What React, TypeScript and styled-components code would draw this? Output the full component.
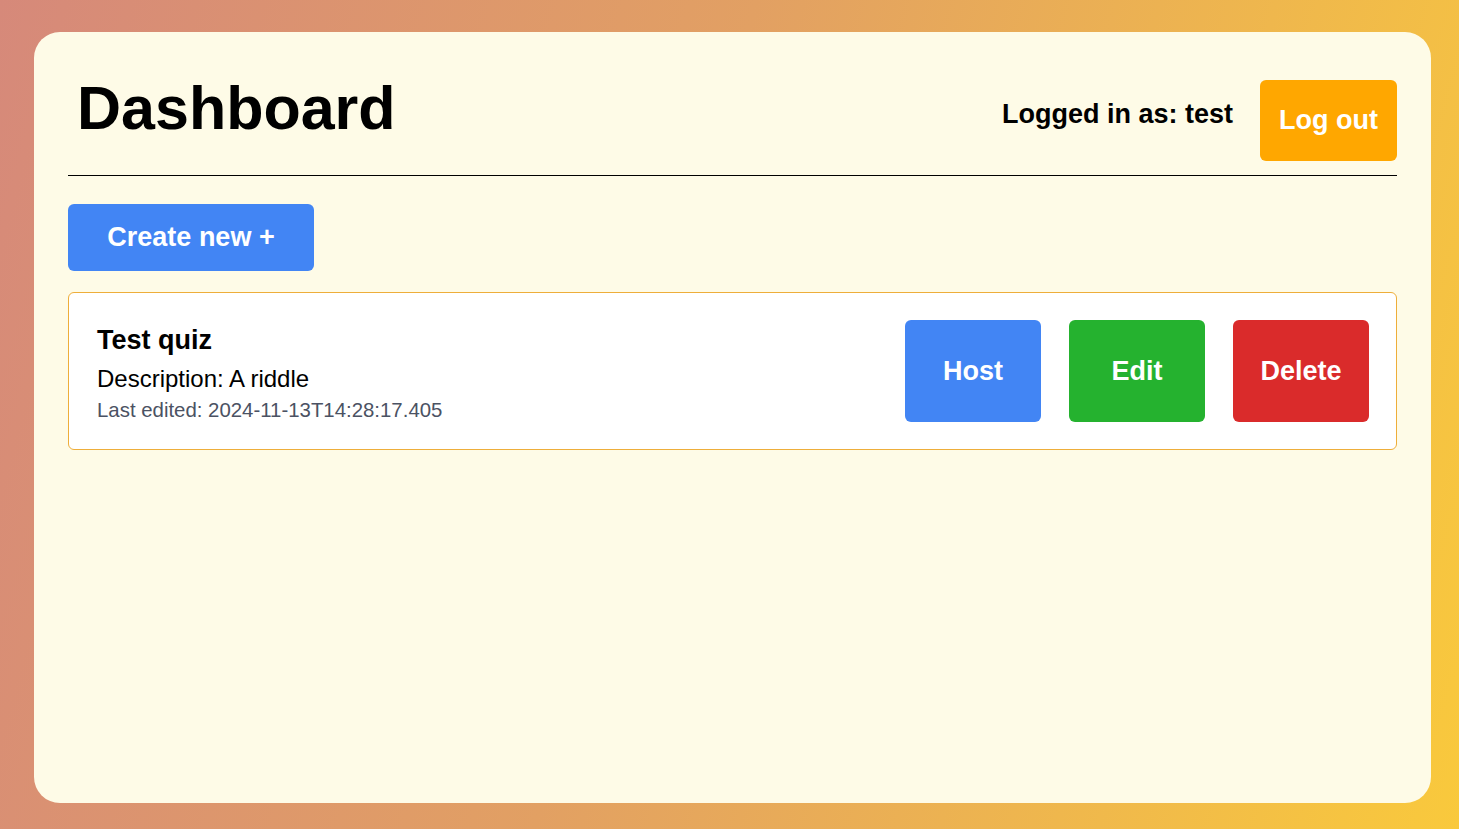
import React from 'react';
import styled, { createGlobalStyle } from 'styled-components';

const GlobalStyle = createGlobalStyle`
  html, body {
    margin: 0;
    padding: 0;
  }
  body {
    font-family: "Liberation Sans", Arial, sans-serif;
  }
  * {
    box-sizing: border-box;
  }
`;

const Page = styled.div`
  min-height: 100vh;
  padding: 32px 28px 26px 34px;
  background: linear-gradient(105deg, #d6897a 0%, #e2a063 45%, #f9c93c 100%);
  display: flex;
`;

const Card = styled.main`
  flex: 1;
  background-color: #fefbe7;
  border-radius: 26px;
  padding: 34px 34px;
  display: flex;
  flex-direction: column;
`;

const Header = styled.header`
  display: flex;
  justify-content: space-between;
  align-items: flex-start;
  padding-bottom: 14px;
  border-bottom: 1px solid #000;
`;

const Title = styled.h1`
  margin: 7px 0 0;
  padding: 0 10px 0 9px;
  font-size: 61px;
  font-weight: 700;
  color: #000;
`;

const UserArea = styled.div`
  display: flex;
  align-items: flex-start;
  gap: 27px;
`;

const UserLabel = styled.span`
  margin-top: 33px;
  font-size: 27px;
  font-weight: 700;
  color: #000;
`;

const Button = styled.button<{ $color: string }>`
  border: none;
  border-radius: 6px;
  background-color: ${(p) => p.$color};
  color: #fff;
  font-family: "Liberation Sans", Arial, sans-serif;
  font-weight: 700;
  cursor: pointer;
`;

const LogoutButton = styled(Button)`
  margin-top: 14px;
  height: 81px;
  padding: 0 19px;
  font-size: 27px;
`;

const CreateButton = styled(Button)`
  align-self: flex-start;
  margin-top: 28px;
  height: 67px;
  width: 246px;
  padding: 0;
  font-size: 27px;
`;

const QuizList = styled.section`
  margin-top: 21px;
  display: flex;
  flex-direction: column;
  gap: 16px;
`;

const QuizCard = styled.article`
  display: flex;
  align-items: center;
  justify-content: space-between;
  padding: 27px 27px 27px 28px;
  background-color: #fff;
  border: 1px solid #eeae3a;
  border-radius: 6px;
`;

const QuizInfo = styled.div`
  display: flex;
  flex-direction: column;
  margin-top: 5px;
`;

const QuizName = styled.h2`
  margin: 0 0 9px;
  font-size: 27px;
  font-weight: 700;
  color: #000;
`;

const QuizDesc = styled.p`
  margin: 0 0 6px;
  font-size: 24px;
  color: #000;
`;

const QuizDate = styled.p`
  margin: 0;
  font-size: 20.4px;
  color: #4b5263;
`;

const Actions = styled.div`
  display: flex;
  gap: 28px;
`;

const ActionButton = styled(Button)`
  width: 136px;
  height: 102px;
  font-size: 27px;
`;

const quizzes = [
  {
    name: 'Test quiz',
    description: 'A riddle',
    edited: '2024-11-13T14:28:17.405',
  },
];

const App: React.FC = () => {
  return (
    <>
      <GlobalStyle />
      <Page>
        <Card>
          <Header>
            <Title>Dashboard</Title>
            <UserArea>
              <UserLabel>Logged in as: test</UserLabel>
              <LogoutButton $color="#ffa700">Log out</LogoutButton>
            </UserArea>
          </Header>
          <CreateButton $color="#4285f4">Create new +</CreateButton>
          <QuizList>
            {quizzes.map((quiz, index) => (
              <QuizCard key={index}>
                <QuizInfo>
                  <QuizName>{quiz.name}</QuizName>
                  <QuizDesc>Description: {quiz.description}</QuizDesc>
                  <QuizDate>Last edited: {quiz.edited}</QuizDate>
                </QuizInfo>
                <Actions>
                  <ActionButton $color="#4285f4">Host</ActionButton>
                  <ActionButton $color="#25b22f">Edit</ActionButton>
                  <ActionButton $color="#da2b2b">Delete</ActionButton>
                </Actions>
              </QuizCard>
            ))}
          </QuizList>
        </Card>
      </Page>
    </>
  );
};

export default App;
